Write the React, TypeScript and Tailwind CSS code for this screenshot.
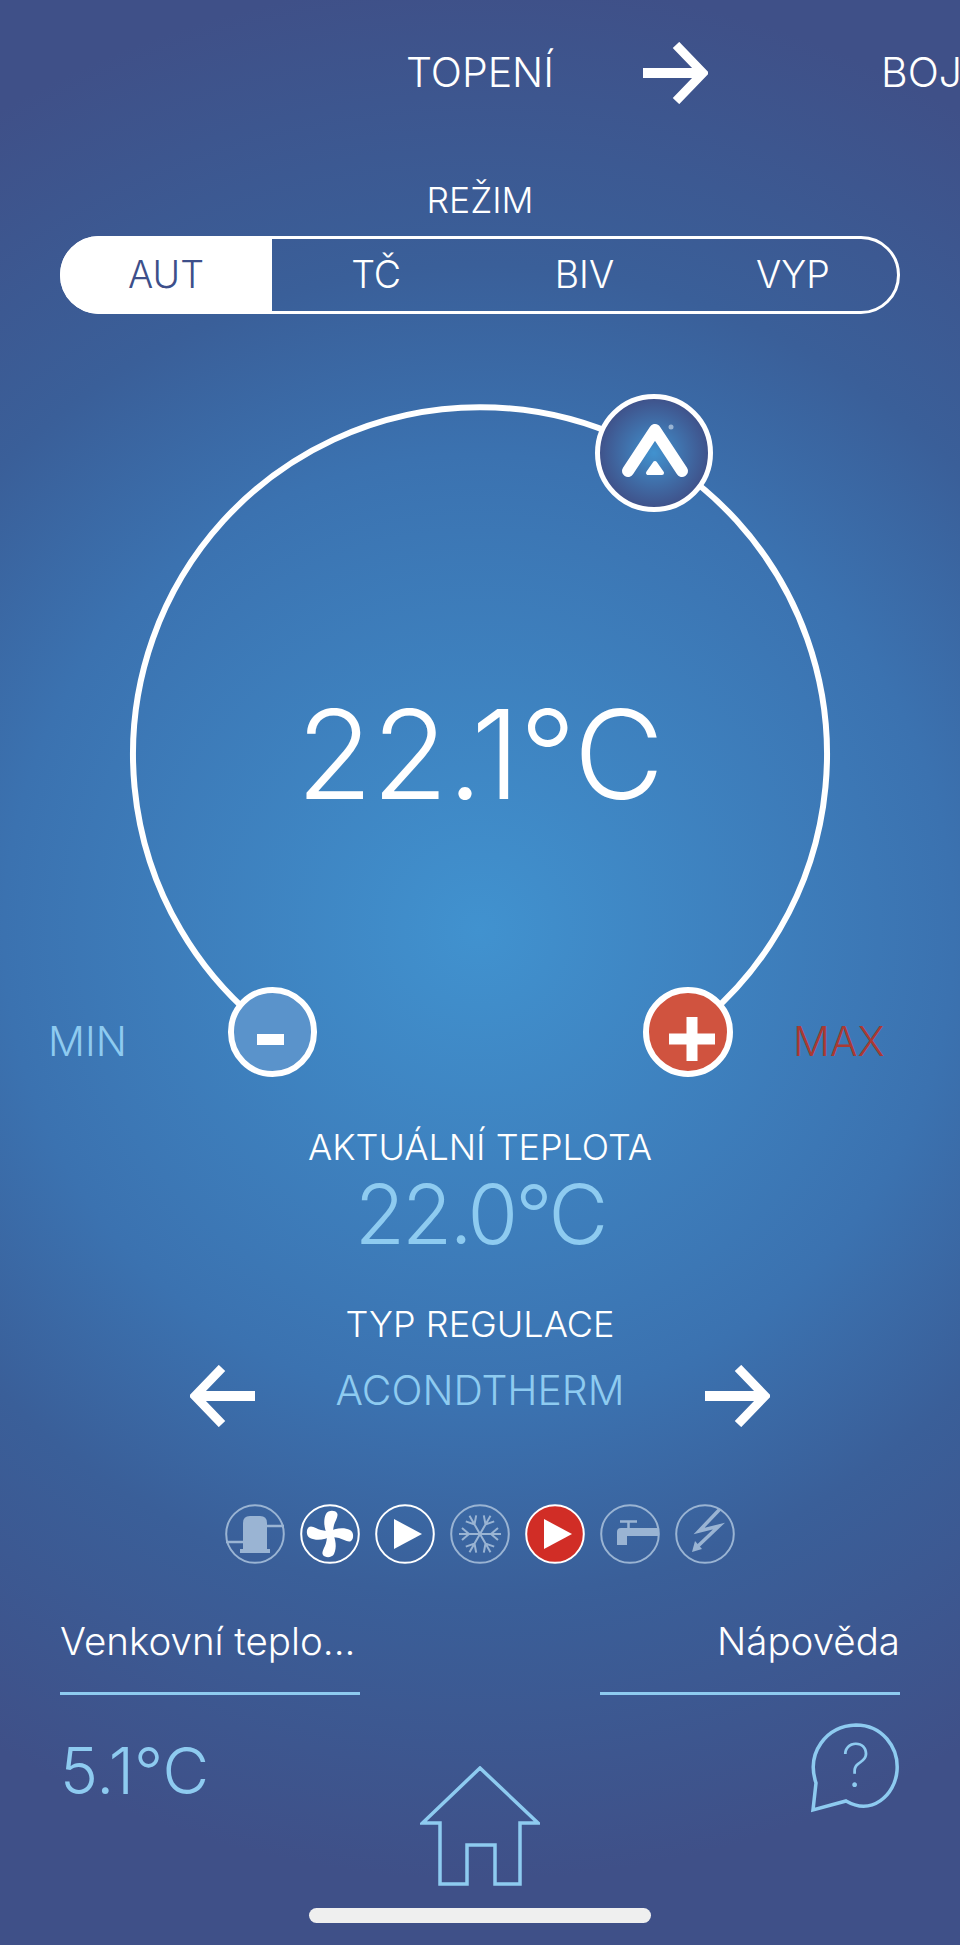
import React from 'react';

const LIGHT = '#8ecbf0';
const FADED = '#9ab4d3';

const modes = ['TČ', 'BIV', 'VYP'];

const ArrowIcon = ({ className = '' }: { className?: string }) => (
  <svg viewBox="0 0 65 62" className={`block shrink-0 w-[65px] h-[62px] ${className}`} fill="none" stroke="white">
    <path d="M0 31H58" strokeWidth="10" />
    <path d="M33 3L60 31L33 59" strokeWidth="9" />
  </svg>
);

const Ring = ({ children, stroke = FADED, fill = 'none' }: { children?: React.ReactNode; stroke?: string; fill?: string }) => (
  <svg viewBox="-30 -30 60 60" className="block w-[60px] h-[60px]">
    <circle cx="0" cy="0" r="28.8" fill={fill} stroke={stroke} strokeWidth="2" />
    {children}
  </svg>
);

const Play = () => <path d="M-11 -15L17 0L-11 15Z" fill="white" />;

const StatusIcons = () => (
  <div className="flex justify-center gap-[15px] mt-[80px]">
    {/* compressor */}
    <Ring>
      <path d="M-12 15V-11Q-12 -18 -5 -18H5Q12 -18 12 -11V15Z" fill={FADED} />
      <rect x="-15" y="15" width="30" height="4" fill={FADED} />
      <path d="M12 -8H29M-29 8H-12" stroke={FADED} strokeWidth="2.5" />
    </Ring>
    {/* fan */}
    <Ring stroke="white">
      <circle r="4" fill="white" />
      {[0, 90, 180, 270].map(r => (
        <path key={r} transform={`rotate(${r})`} d="M-2 2C-6 -5 -7 -14 -4 -20C-2 -24 5 -24 7 -21C9 -18 5 -13 4 -9C3 -5 3 -2 3 1Z" fill="white" />
      ))}
    </Ring>
    <Ring stroke="white"><Play /></Ring>
    {/* snowflake */}
    <Ring>
      {[30, 90, 150, 210, 270, 330].map(r => (
        <path key={r} transform={`rotate(${r})`} d="M0 0V-21M-6 -18L0 -11L6 -18" fill="none" stroke={FADED} strokeWidth="2" />
      ))}
    </Ring>
    <Ring stroke="white" fill="#d12d26"><Play /></Ring>
    {/* tap */}
    <Ring>
      <path d="M-10 -12.5H7M-1.5 -12V-6" stroke={FADED} strokeWidth="2.5" />
      <path d="M-13 11V-2Q-13 -6 -9 -6H29V2H-3V11Z" fill={FADED} />
    </Ring>
    {/* no power */}
    <Ring>
      <path d="M15 -25L-6 -3L14 -8L-8 13" fill="none" stroke={FADED} strokeWidth="3.5" />
      <path d="M-13 18L-10 7L-3 15Z" fill={FADED} />
    </Ring>
  </div>
);

const Dial = () => (
  <div className="relative h-[776px]">
    <svg viewBox="0 0 960 776" className="block w-[960px] h-[776px]" fill="none">
      <path d="M272 718A347 347 0 1 1 688 718" stroke="white" strokeWidth="6" />
    </svg>

    <div className="absolute left-0 right-0 top-[372px] text-center text-white text-[124px] leading-[136px] tracking-[-0.6px] font-[350]">22.1°C</div>

    {/* knob */}
    <svg viewBox="-60 -60 120 120" className="absolute left-[594px] top-[79px] w-[120px] h-[120px]">
      <defs>
        <radialGradient id="knob">
          <stop offset="0" stopColor="#4192cf" />
          <stop offset="1" stopColor="#3f5088" />
        </radialGradient>
      </defs>
      <circle r="56.5" fill="url(#knob)" stroke="white" strokeWidth="5" />
      <path d="M-26 18L1 -23L28 18" fill="none" stroke="white" strokeWidth="12" strokeLinecap="round" strokeLinejoin="round" />
      <path d="M1 10L-6 20H8Z" fill="white" stroke="white" strokeWidth="4" strokeLinejoin="round" />
      <circle cx="17" cy="-26" r="2.5" fill={FADED} />
    </svg>

    <button className="absolute left-[228px] top-[673px] w-[89px] h-[90px] rounded-full bg-[#5a93cb] border-[6px] border-white flex items-center justify-center">
      <span className="block w-[27px] h-[11px] bg-white translate-y-[7px] -translate-x-[2px]" />
    </button>
    <button className="absolute left-[643px] top-[673px] w-[90px] h-[90px] rounded-full bg-[#d0533f] border-[6px] border-white flex items-center justify-center">
      <svg viewBox="0 0 46 44" className="block w-[46px] h-[44px] translate-x-[4px] translate-y-[7px]">
        <path d="M23 0V44M0 22H46" stroke="white" strokeWidth="11" />
      </svg>
    </button>

    <span className="absolute left-[48px] top-[704px] text-[41px] leading-[46px] text-[#8ecbf0]">MIN</span>
    <span className="absolute left-[793px] top-[704px] text-[41px] leading-[46px] text-[#a93a33]">MAX</span>
  </div>
);

export default function App() {
  return (
    <div
      className="w-[960px] h-[1945px] overflow-hidden text-white font-light bg-[radial-gradient(circle_950px_at_479px_930px,#4192cf_0%,#3b72b0_50%,#3a5f99_70%,#3f5088_100%)]"
      style={{ fontFamily: 'Inter, "Liberation Sans", sans-serif' }}
    >
      {/* carousel title */}
      <div className="h-[146px] pl-[406px] flex items-center whitespace-nowrap overflow-hidden">
        <span className="w-[146px] shrink-0 text-center text-[41px]">TOPENÍ</span>
        <ArrowIcon className="ml-[91px]" />
        <span className="ml-[173px] text-[41px]">BOJLER</span>
      </div>

      <div className="h-[40px] mt-[35px] text-center text-[35.5px] leading-[40px]">REŽIM</div>

      <div className="mx-[60px] mt-[15px] h-[78px] flex rounded-[39px] border-[3px] border-white text-[37.5px]">
        <div className="w-[212px] shrink-0 -my-[3px] -ml-[3px] rounded-l-[39px] bg-white text-[#3d4f8a] flex items-center justify-center">AUT</div>
        {modes.map(m => (
          <div key={m} className="flex-1 flex items-center justify-center">{m}</div>
        ))}
      </div>

      <Dial />

      <div className="mt-[35px] h-[44px] text-center text-[36px] leading-[44px]">AKTUÁLNÍ TEPLOTA</div>
      <div className="mt-px h-[90px] text-center text-[82px] leading-[90px] tracking-[-3px] text-[#8ecbf0]">22.0°C</div>
      <div className="mt-[42px] h-[44px] text-center text-[36px] leading-[44px]">TYP REGULACE</div>

      <div className="mt-[12px] h-[66px] flex items-center justify-center">
        <ArrowIcon className="rotate-180 translate-y-[5px]" />
        <span className="w-[450px] text-center text-[40.8px] text-[#8ecbf0]">ACONDTHERM</span>
        <ArrowIcon className="translate-y-[5px]" />
      </div>

      <StatusIcons />

      {/* bottom info */}
      <div className="mt-[48px] px-[60px] flex justify-between">
        <div className="w-[300px]">
          <div className="h-[83px] border-b-[3px] border-[#8ecbf0] text-[38.5px] leading-[58px] whitespace-nowrap">Venkovní teplo...</div>
          <div className="mt-[36px] text-[64px] leading-[80px] text-[#8ecbf0]">5.1°C</div>
        </div>
        <svg viewBox="0 0 120 120" className="block w-[120px] h-[120px] mt-[154px]" fill="none" stroke={LIGHT} strokeWidth="3.5">
          <path d="M60 2L2.5 57H20V118H47V79H75V118H100V57H118Z" />
        </svg>
        <div className="w-[300px]">
          <div className="h-[83px] border-b-[3px] border-[#8ecbf0] text-right text-[38.5px] leading-[58px]">Nápověda</div>
          <svg viewBox="0 0 90 90" className="block ml-auto mt-[28px] w-[90px] h-[90px]" fill="none" stroke={LIGHT} strokeWidth="3.5">
            <path d="M3 87L6 60C-4 30 16 3 46 2C72 2 89 24 87 48C85 72 62 93 36 78Z" />
            <text x="46" y="64" textAnchor="middle" fontSize="60" fontWeight="200" fill={LIGHT} stroke="none">?</text>
          </svg>
        </div>
      </div>

      {/* home indicator */}
      <div className="mx-auto mt-[22px] w-[342px] h-[15px] rounded-[8px] bg-[#efefef]" />
    </div>
  );
}
